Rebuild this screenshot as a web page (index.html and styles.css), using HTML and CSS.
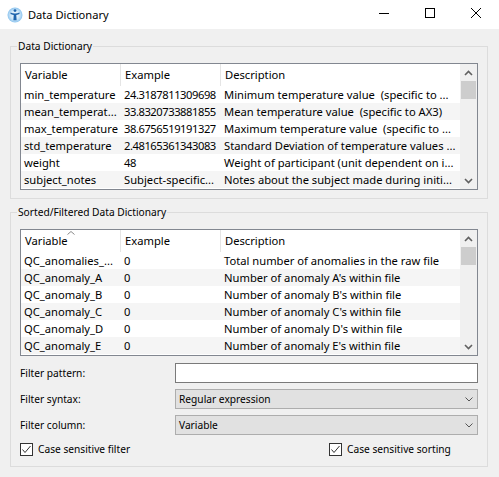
FILE: index.html
```html
<!DOCTYPE html>
<html>
<head>
<meta charset="utf-8">
<title>Data Dictionary</title>
<link rel="stylesheet" href="styles.css">
</head>
<body>
<header class="titlebar">
  <svg class="app-icon" viewBox="0 0 16 16" width="16" height="16">
    <defs>
      <radialGradient id="glow" cx="50%" cy="50%" r="50%">
        <stop offset="0%" stop-color="#ffffff"/>
        <stop offset="60%" stop-color="#cfe7fa"/>
        <stop offset="100%" stop-color="#8cc4ee"/>
      </radialGradient>
    </defs>
    <circle cx="8" cy="8" r="7.5" fill="url(#glow)"/>
    <circle cx="8" cy="3.6" r="1.4" fill="#1f64ad"/>
    <path d="M3.5 5.6 Q8 7.4 12.5 5.6 L12.5 7 Q10 7.8 9.3 8 L9.6 13.2 L6.4 13.2 L6.7 8 Q6 7.8 3.5 7 Z" fill="#1f64ad"/>
  </svg>
  <span class="title">Data Dictionary</span>
  <div class="controls">
    <span class="ctl"><svg viewBox="0 0 10 10" width="10" height="10"><line x1="0" y1="5.5" x2="10" y2="5.5" stroke="#000" stroke-width="1"/></svg></span>
    <span class="ctl"><svg viewBox="0 0 10 10" width="10" height="10"><rect x="0.5" y="0.5" width="9" height="9" fill="none" stroke="#000" stroke-width="1"/></svg></span>
    <span class="ctl"><svg viewBox="0 0 10 10" width="10" height="10"><path d="M0 0 L10 10 M10 0 L0 10" stroke="#000" stroke-width="1"/></svg></span>
  </div>
</header>

<main class="client">
  <section class="group g1">
    <span class="legend">Data Dictionary</span>
    <div class="view">
      <div class="grid">
        <div class="hdr"><span>Variable</span><span>Example</span><span>Description</span></div>
        <div class="row"><span>min_temperature</span><span class="num">24.3187811309698</span><span>Minimum temperature value  (specific to ...</span></div>
        <div class="row alt"><span>mean_temperat...</span><span class="num">33.8320733881855</span><span>Mean temperature value  (specific to AX3)</span></div>
        <div class="row"><span>max_temperature</span><span class="num">38.6756519191327</span><span>Maximum temperature value  (specific to ...</span></div>
        <div class="row alt"><span>std_temperature</span><span class="num">2.48165361343083</span><span>Standard Deviation of temperature values ...</span></div>
        <div class="row"><span>weight</span><span class="num">48</span><span>Weight of participant (unit dependent on i...</span></div>
        <div class="row alt"><span>subject_notes</span><span>Subject-specific...</span><span>Notes about the subject made during initi...</span></div>
      </div>
      <div class="vscroll">
        <span class="arrow"><svg viewBox="0 0 9 6" width="9" height="6"><polyline points="1,5 4.5,1.5 8,5" fill="none" stroke="#606060" stroke-width="1.6"/></svg></span>
        <span class="thumb"></span>
        <span class="track"></span>
        <span class="arrow"><svg viewBox="0 0 9 6" width="9" height="6"><polyline points="1,1 4.5,4.5 8,1" fill="none" stroke="#606060" stroke-width="1.6"/></svg></span>
      </div>
    </div>
  </section>

  <section class="group g2">
    <span class="legend">Sorted/Filtered Data Dictionary</span>
    <div class="view">
      <div class="grid">
        <div class="hdr"><span class="sorted">Variable<svg class="sort-ind" viewBox="0 0 8 4" width="8" height="4"><polyline points="0.5,3.5 4,0.5 7.5,3.5" fill="none" stroke="#8a8a8a" stroke-width="1"/></svg></span><span>Example</span><span>Description</span></div>
        <div class="row"><span>QC_anomalies_...</span><span class="num">0</span><span>Total number of anomalies in the raw file</span></div>
        <div class="row alt"><span>QC_anomaly_A</span><span class="num">0</span><span>Number of anomaly A's within file</span></div>
        <div class="row"><span>QC_anomaly_B</span><span class="num">0</span><span>Number of anomaly B's within file</span></div>
        <div class="row alt"><span>QC_anomaly_C</span><span class="num">0</span><span>Number of anomaly C's within file</span></div>
        <div class="row"><span>QC_anomaly_D</span><span class="num">0</span><span>Number of anomaly D's within file</span></div>
        <div class="row alt"><span>QC_anomaly_E</span><span class="num">0</span><span>Number of anomaly E's within file</span></div>
      </div>
      <div class="vscroll">
        <span class="arrow"><svg viewBox="0 0 9 6" width="9" height="6"><polyline points="1,5 4.5,1.5 8,5" fill="none" stroke="#606060" stroke-width="1.6"/></svg></span>
        <span class="thumb"></span>
        <span class="track"></span>
        <span class="arrow"><svg viewBox="0 0 9 6" width="9" height="6"><polyline points="1,1 4.5,4.5 8,1" fill="none" stroke="#606060" stroke-width="1.6"/></svg></span>
      </div>
    </div>

    <div class="form">
      <span class="label">Filter pattern:</span>
      <span class="input"></span>
      <span class="label">Filter syntax:</span>
      <span class="combo"><span>Regular expression</span><svg viewBox="0 0 8 5" width="8" height="5"><polyline points="0.5,0.5 4,4 7.5,0.5" fill="none" stroke="#555" stroke-width="1"/></svg></span>
      <span class="label">Filter column:</span>
      <span class="combo"><span>Variable</span><svg viewBox="0 0 8 5" width="8" height="5"><polyline points="0.5,0.5 4,4 7.5,0.5" fill="none" stroke="#555" stroke-width="1"/></svg></span>
    </div>

    <div class="checks">
      <label class="check"><span class="box"><svg viewBox="0 0 11 11" width="11" height="11"><polyline points="1.5,5.5 4,8.5 9.5,2" fill="none" stroke="#333" stroke-width="1"/></svg></span>Case sensitive filter</label>
      <label class="check"><span class="box"><svg viewBox="0 0 11 11" width="11" height="11"><polyline points="1.5,5.5 4,8.5 9.5,2" fill="none" stroke="#333" stroke-width="1"/></svg></span>Case sensitive sorting</label>
    </div>
  </section>
</main>
</body>
</html>
```

FILE: styles.css
```css
html, body {
  margin: 0;
  padding: 0;
}
body {
  width: 499px;
  height: 477px;
  overflow: hidden;
  background: #f0f0f0;
  font-family: "Noto Sans", "DejaVu Sans", sans-serif;
  font-size: 10.2px;
  color: #000;
}

/* Title bar */
.titlebar {
  height: 29px;
  background: #ffffff;
  display: flex;
  align-items: center;
}
.app-icon {
  margin-left: 7px;
  margin-right: 5px;
  flex: none;
}
.title {
  flex: 1;
  font-size: 11.1px;
  line-height: 16px;
}
.controls {
  display: flex;
  align-self: stretch;
}
.ctl {
  width: 46px;
  display: flex;
  justify-content: center;
  padding-top: 8px;
  box-sizing: border-box;
}
.ctl svg { display: block; }

/* Client area */
.client {
  padding: 17px 11px 0 10px;
}
.group {
  position: relative;
  border: 1px solid #dcdcdc;
  padding: 16px 9px 8px 9px;
}
.g2 {
  margin-top: 13px;
}
.legend {
  position: absolute;
  top: -9px;
  left: 6px;
  padding: 0 1px;
  line-height: 16px;
  background: #f0f0f0;
}

/* Item views */
.view {
  display: flex;
  height: 127px;
  box-sizing: border-box;
  border: 1px solid #828790;
  background: #ffffff;
  font-size: 11.2px;
}
.grid {
  flex: 1;
  overflow: hidden;
}
.hdr, .row {
  display: grid;
  grid-template-columns: 100px 100px 1fr;
}
.hdr {
  height: 22px;
  line-height: 22px;
}
.hdr span {
  position: relative;
  padding-left: 4px;
  border-right: 1px solid #e5e5e5;
  white-space: nowrap;
}
.hdr span:last-child {
  border-right: none;
}
.sort-ind {
  position: absolute;
  left: 46px;
  top: 1px;
}
.row {
  height: 17px;
  line-height: 17px;
}
.row span {
  padding-left: 3px;
  white-space: pre;
  overflow: hidden;
}
.row span.num {
  letter-spacing: -0.45px;
}
.row.alt {
  background: #f5f5f5;
}

.vscroll {
  width: 17px;
  flex: none;
  display: flex;
  flex-direction: column;
  background: #f0f0f0;
}
.arrow {
  height: 17px;
  display: flex;
  align-items: center;
  justify-content: center;
  flex: none;
}
.arrow svg { display: block; }
.thumb {
  height: 18px;
  margin: 0 1px;
  background: #cdcdcd;
  flex: none;
}
.track {
  flex: 1;
}

/* Filter form */
.form {
  display: grid;
  grid-template-columns: 155px 1fr;
  row-gap: 6px;
  margin-top: 7px;
  align-items: center;
}
.label {
  line-height: 20px;
}
.input {
  height: 20px;
  box-sizing: border-box;
  border: 1px solid #7a7a7a;
  background: #ffffff;
}
.combo {
  height: 20px;
  box-sizing: border-box;
  border: 1px solid #adadad;
  background: #e1e1e1;
  display: flex;
  align-items: center;
  justify-content: space-between;
  padding-left: 3px;
  padding-right: 4px;
}
.combo svg { display: block; }

/* Checkboxes */
.checks {
  display: grid;
  grid-template-columns: 309px auto;
  margin-top: 6px;
  height: 17px;
}
.check {
  display: flex;
  align-items: center;
  gap: 5px;
  line-height: 17px;
}
.box {
  width: 13px;
  height: 13px;
  box-sizing: border-box;
  border: 1px solid #333333;
  background: #ffffff;
  display: flex;
  align-items: center;
  justify-content: center;
  flex: none;
}
.box svg { display: block; }
```
